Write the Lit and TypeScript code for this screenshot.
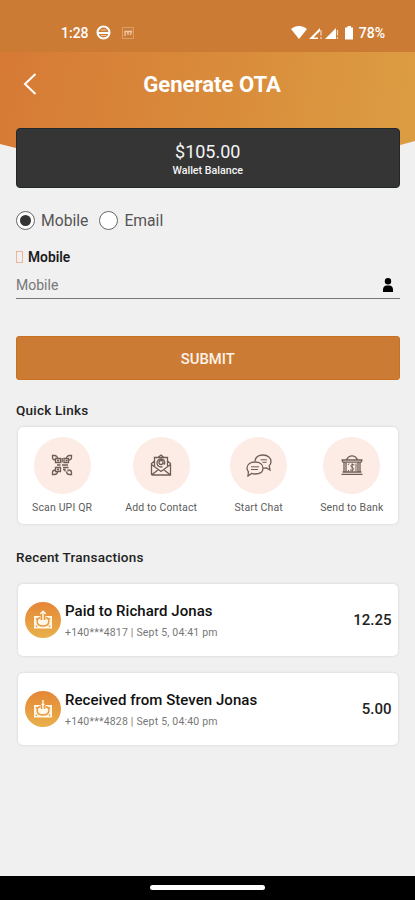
import { LitElement, html, css, svg } from "lit";
import { customElement } from "lit/decorators.js";

const scanIcon = svg`<path d="M6.500 4.500C6.500 2.500 5 1.500 3.500 1.500H1.500v2c0 1.500 1 2.500 3 2.500M15.500 4.500c0-2 1.500-3 3-3h2v2c0 1.500-1 2.500-3 2.500M6.500 17.500c0 2-1.500 3-3 3h-2v-2c0-1.500 1-2.500 3-2.500M15.500 17.500c0 2 1.500 3 3 3h2v-2c0-1.500-1-2.500-3-2.500"/><path d="M4.500 4.500H9.500V8.500H4.500zM13 4.500h4.500V8.500H13zM4.500 13.500H9.500V17.500H4.500zM6 6.500h2M14.500 6.500h2M6 15.500h2M11.200 4v4.500M6 11h3.500M11 11h6M12 13.500h5.500M12 15.500h2v2M17 15.500v2"/>`;
const mailIcon = svg`<path d="M1.500 21h19V9.500L17.500 7M1.500 21V9.500L4.500 7M4.500 12V3.500h13V12M1.500 10.500L11 17.500l9.500-7M1.500 21l7-5.500M20.500 21l-7-5.500M8.500 3l2.500-2 2.500 2"/><path d="M13 8.500a2 2 0 1 1-2-2c1.700 0 2.300 1 2 3l1.500.5c1-3-.8-5-3.500-5a4 4 0 1 0 1.500 7.700"/>`;
const chatIcon = svg`<path d="M9 7C9.500 3.500 12.500 1 17 1c5 0 8 3 8 6.500 0 2-.8 3.300-1.800 4.300L24 16l-4-2.200c-1 .3-2 .3-3 .2M9 8c4.800 0 8 2.500 8 6.200S13.800 20 9 20c-1.300 0-2.500-.2-3.500-.6L2 22l.4-4.300C1.500 16.700 1 15.600 1 14.200 1 10.500 4.200 8 9 8z"/><path d="M5 12.800h8M5 15.500h7M14.500 5.800h6.500M16.500 8.300h4" stroke-width="1"/>`;
const bankIcon = svg`<path d="M.500 6h21M1.500 8.200h19M5.500 5.500C7 3 8.500 1.800 11 1.800S15 3 16.500 5.500M1.500 6v2M20.500 6v2M3 8.500v9.500M5 8.500v9.500M17 8.500v9.500M19 8.500v9.500M1.500 18h19M.500 20.300h21"/><path d="M13.500 11c-3.200-1.700-5 1.300-2.500 2.300 3.200 1 1.800 4.300-2 2.500M11.200 9.300v8M8 9.500l-1 1.500M15 9.500v7.500M7.500 16v1.500" stroke-width="1"/>`;

@customElement("app-root")
export class AppRoot extends LitElement {
  static styles = css`
    :host {
      display: flex;
      flex-direction: column;
      position: relative;
      height: 900px;
      overflow: hidden;
      background: #f0f0f0;
      font-family: Roboto, "Liberation Sans", sans-serif;
      color: #222;
      white-space: nowrap;
    }
    * { box-sizing: border-box; }
    svg { display: block; flex: none; fill: none; }
    .backdrop { position: absolute; left: 0; top: 0; }
    .status {
      position: relative;
      height: 52px;
      padding: 13px 30px 0 61px;
      display: flex;
      align-items: center;
      background: #cc7b35;
      color: #fff;
      font-size: 14px;
      font-weight: 500;
    }
    .globe { margin: 0 11px 0 7px; }
    .spacer { flex: 1; }
    .signals { margin-right: 4px; }
    .bar {
      position: relative;
      height: 76px;
      padding: 0 0 12px 5px;
      display: grid;
      grid-template-columns: 36px 1fr 32px;
      align-items: center;
      text-align: center;
      color: #fff;
    }
    .back { justify-self: end; }
    .title { font-size: 22.100px; font-weight: 700; }
    .body { position: relative; padding: 0 15.500px 0 16px; flex: 1; }
    .wallet {
      height: 60px;
      border-radius: 4px;
      background: #353535;
      border: 1px solid #20282c;
      color: #f4f4f4;
      text-align: center;
      padding-top: 11px;
    }
    .amount { font-size: 18px; line-height: 24px; }
    .caption { font-size: 10.700px; line-height: 13px; font-weight: 500; }
    .radios { display: flex; align-items: center; height: 24px; margin-top: 20px; font-size: 15.700px; color: #555; }
    .radio {
      width: 19px;
      height: 19px;
      border: 1.500px solid #666;
      border-radius: 50%;
      background: #fff;
      display: grid;
      place-items: center;
      margin-right: 6px;
    }
    .dot { width: 11px; height: 11px; border-radius: 50%; background: #353535; }
    .option { display: flex; align-items: center; margin-right: 11px; }
    .label { display: flex; align-items: center; height: 20px; margin-top: 15px; font-size: 13.800px; font-weight: 600; color: #1c1c1c; }
    .missing { width: 7px; height: 12px; border: 1px solid #edb59c; margin-right: 5px; }
    .field {
      display: flex;
      align-items: center;
      justify-content: space-between;
      height: 31.500px;
      padding: 5px 6px 0 0;
      border-bottom: 1.500px solid #777;
      font-size: 14px;
      color: #777;
    }
    .submit {
      display: flex;
      align-items: center;
      justify-content: center;
      height: 44px;
      width: 100%;
      margin-top: 37.500px;
      padding-top: 2px;
      border: 1px solid #c87220;
      border-radius: 3px;
      background: #cc7b35;
      color: #fff3e8;
      font: 500 14.800px Roboto, sans-serif;
    }
    .heading { font-size: 13.500px; font-weight: 500; line-height: 20px; letter-spacing: .22px; color: #222; }
    .quick { margin-top: 20px; }
    .recent { margin-top: 23px; }
    .card { background: #fff; border-radius: 5px; margin: 0 2px; box-shadow: 0 0 3px #0002; }
    .links { display: flex; justify-content: center; gap: 33px; height: 97px; margin-top: 7px; padding-top: 9.500px; }
    .link { display: flex; flex-direction: column; align-items: center; font-size: 10.500px; line-height: 14px; letter-spacing: .15px; color: #5c5c5c; }
    .disc { width: 57px; height: 57px; border-radius: 50%; background: #fcece5; display: grid; place-items: center; margin-bottom: 7px; }
    .disc svg { stroke: #6e5d54; stroke-width: 1.300; }
    .tx { display: flex; align-items: center; height: 72.500px; padding: 0 6px 0 7px; margin-top: 16.500px; }
    .coin { width: 36px; height: 36px; border-radius: 50%; background: linear-gradient(#e58636, #e9b04c); display: grid; place-items: center; margin-right: 4px; }
    .details { flex: 1; padding-top: 2px; }
    .name { font-size: 15px; font-weight: 500; line-height: 20px; letter-spacing: .05px; color: #111; }
    .meta { font-size: 10.500px; line-height: 14px; letter-spacing: .2px; margin-top: 5px; color: #777; }
    .sum { font-size: 15px; font-weight: 500; padding-top: 1px; }
    .nav { height: 24.500px; background: #000; display: flex; justify-content: center; padding-top: 9px; }
    .pill { width: 115px; height: 5px; border-radius: 3px; background: #fff; }
  `;

  private link(icon: unknown, text: string, w = 22, h = 22) {
    return html`<div class="link"><div class="disc"><svg width=${w} height=${h} viewBox="0 0 ${w} ${h}">${icon}</svg></div><span>${text}</span></div>`;
  }

  private transaction(name: string, meta: string, sum: string, paid: boolean) {
    return html`<div class="card tx">
      <div class="coin"><svg width="20" height="20" viewBox="0 0 20 20">
        <path d="M1 6h18v12.500H1z" fill="#fff6e6"/>
        <path d="M7 7.500c-4.500 2-4 8.500 3 8.500s7.500-6.500 3-8.500M3.500 8v1.500M16.500 8v1.500M3.500 15.500V17M16.500 15.500V17" stroke="#e79a40" stroke-width="1.400"/>
        <path d="M7.500 5h5v5h-5z" fill="#e79a40"/>
        <path d=${paid ? "M10 13V1.500M7.200 4L10 1.200 12.800 4M8 13h4" : "M10 1v12M7 9.500l3 3.500 3-3.500M8.500 5.500h3"} stroke="#fff6e6" stroke-width="1.500"/>
      </svg></div>
      <div class="details"><div class="name">${name}</div><div class="meta">${meta}</div></div>
      <div class="sum">${sum}</div>
    </div>`;
  }

  render() {
    return html`
      <svg class="backdrop" width="415" height="180" viewBox="0 0 415 180">
        <defs><linearGradient id="g" gradientUnits="userSpaceOnUse" x1="0" y1="75" x2="400" y2="150">
          <stop offset="0" stop-color="#d67a36"/><stop offset=".5" stop-color="#d98a3a"/><stop offset="1" stop-color="#dc9c42"/>
        </linearGradient></defs>
        <path d="M0 0H415V141Q208 200 0 144Z" fill="url(#g)"/>
      </svg>
      <div class="status">
        <span>1:28</span>
        <svg class="globe" width="15" height="15" viewBox="0 0 15 15" stroke="#fff" stroke-width="2">
          <circle cx="7.500" cy="7.500" r="6"/><path d="M2 8h11"/><path d="M4.500 5h6M5 10.500h5" stroke-width="1" opacity=".6"/>
        </svg>
        <svg width="12" height="12" viewBox="0 0 12 12" stroke="#f0c9a8">
          <path d="M.5.5h11v11H.5z" opacity=".45"/><path d="M3 9V4.500h3V8M6 4.500h3.500L8.500 8" stroke-width="1.300"/>
        </svg>
        <span class="spacer"></span>
        <svg class="signals" width="64" height="15" viewBox="0 0 64 15">
          <path d="M0 4C4.500 0 11.500 0 16 4L8 14z" fill="#fff"/>
          <path d="M18 14L29 3V6L22.500 12.500H27V14zM34 14L45 3V14z" fill="#fff"/>
          <path d="M30 5v5.500M30 12v2M46.500 5v5.500M46.500 12v2" stroke="#f6d9c0" stroke-width="1.200"/>
          <path d="M54 2.500h2.500V1h3.500v1.500h2V14.500h-8z" fill="#fff"/>
        </svg>
        <span>78%</span>
      </div>
      <div class="bar">
        <svg class="back" width="18" height="22" viewBox="0 0 18 22" stroke="#fff" stroke-width="2"><path d="M12.500 1L2 11l10.500 10"/></svg>
        <span class="title">Generate OTA</span>
      </div>
      <div class="body">
        <div class="wallet"><div class="amount">$105.00</div><div class="caption">Wallet Balance</div></div>
        <div class="radios">
          <span class="option"><span class="radio"><span class="dot"></span></span><span>Mobile</span></span>
          <span class="option"><span class="radio"></span><span>Email</span></span>
        </div>
        <div class="label"><span class="missing"></span><span>Mobile</span></div>
        <div class="field"><span>Mobile</span>
          <svg width="12" height="14" viewBox="0 0 12 14" fill="#000"><circle cx="6" cy="3.300" r="3.200" fill="#000"/><path fill="#000" d="M1 14v-2.500C1 9 2.500 8 4 7.500h4c1.500.5 3 1.500 3 4V14z"/></svg>
        </div>
        <button class="submit"><span>SUBMIT</span></button>
        <div class="heading quick">Quick Links</div>
        <div class="card links">
          ${this.link(scanIcon, "Scan UPI QR")}
          ${this.link(mailIcon, "Add to Contact")}
          ${this.link(chatIcon, "Start Chat", 26, 23)}
          ${this.link(bankIcon, "Send to Bank")}
        </div>
        <div class="heading recent">Recent Transactions</div>
        ${this.transaction("Paid to Richard Jonas", "+140***4817 | Sept 5, 04:41 pm", "12.25", true)}
        ${this.transaction("Received from Steven Jonas", "+140***4828 | Sept 5, 04:40 pm", "5.00", false)}
      </div>
      <div class="nav"><div class="pill"></div></div>
    `;
  }
}
